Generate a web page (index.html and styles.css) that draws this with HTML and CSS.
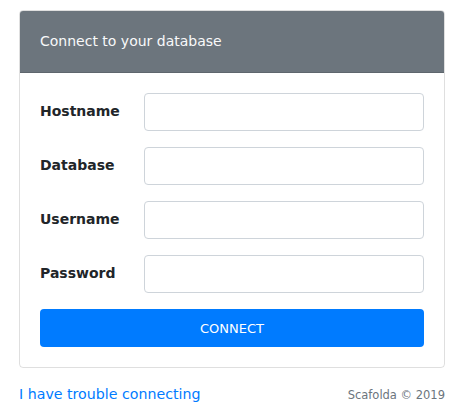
FILE: index.html
```html
<!DOCTYPE html>
<html>
<head>
<meta charset="utf-8">
<link rel="stylesheet" href="styles.css">
</head>
<body>
<div class="page">
  <div class="card">
    <div class="card-header">Connect to your database</div>
    <form class="card-body">
      <div class="row"><label>Hostname</label><input class="control" type="text"></div>
      <div class="row"><label>Database</label><input class="control" type="text"></div>
      <div class="row"><label>Username</label><input class="control" type="text"></div>
      <div class="row"><label>Password</label><input class="control" type="password"></div>
      <button class="btn" type="button">Connect</button>
    </form>
  </div>
  <div class="footer">
    <a class="help" href="#">I have trouble connecting</a>
    <span class="copy">Scafolda © 2019</span>
  </div>
</div>
</body>
</html>
```
FILE: styles.css
```css
* { box-sizing: border-box; }
html, body { margin: 0; padding: 0; background: #fff; }
body {
  font-family: "DejaVu Sans", sans-serif;
  font-size: 14px;
  line-height: 21px;
  color: #212529;
}
.page {
  width: 426px;
  margin-left: 19px;
  padding-top: 10px;
}
.card {
  border: 1px solid rgba(0,0,0,.125);
  border-radius: 4px;
  overflow: hidden;
}
.card-header {
  background: #6c757d;
  color: #f8f9fa;
  padding: 20px 20px 20px;
  border-bottom: 1px solid rgba(0,0,0,.125);
}
.card-body {
  padding: 20px 20px 20px;
  display: flex;
  flex-direction: column;
  gap: 16px;
  margin: 0;
}
.row {
  display: grid;
  grid-template-columns: 104px 1fr;
  align-items: center;
}
.row label {
  font-weight: bold;
  margin-top: -2px;
}
.control {
  height: 38px;
  border: 1px solid #ced4da;
  border-radius: 4px;
  background: #fff;
  font: inherit;
  padding: 6px 12px;
  width: 100%;
}
.btn {
  height: 38px;
  border: 0;
  border-radius: 4px;
  background: #007bff;
  color: #fff;
  font: inherit;
  font-size: 13px;
  text-transform: uppercase;
  width: 100%;
}
.footer {
  display: flex;
  justify-content: space-between;
  align-items: baseline;
  margin-top: 16px;
}
.help {
  color: #007bff;
  text-decoration: none;
  font-size: 14.2px;
}
.copy {
  font-size: 11.5px;
  color: #6c757d;
}
```
